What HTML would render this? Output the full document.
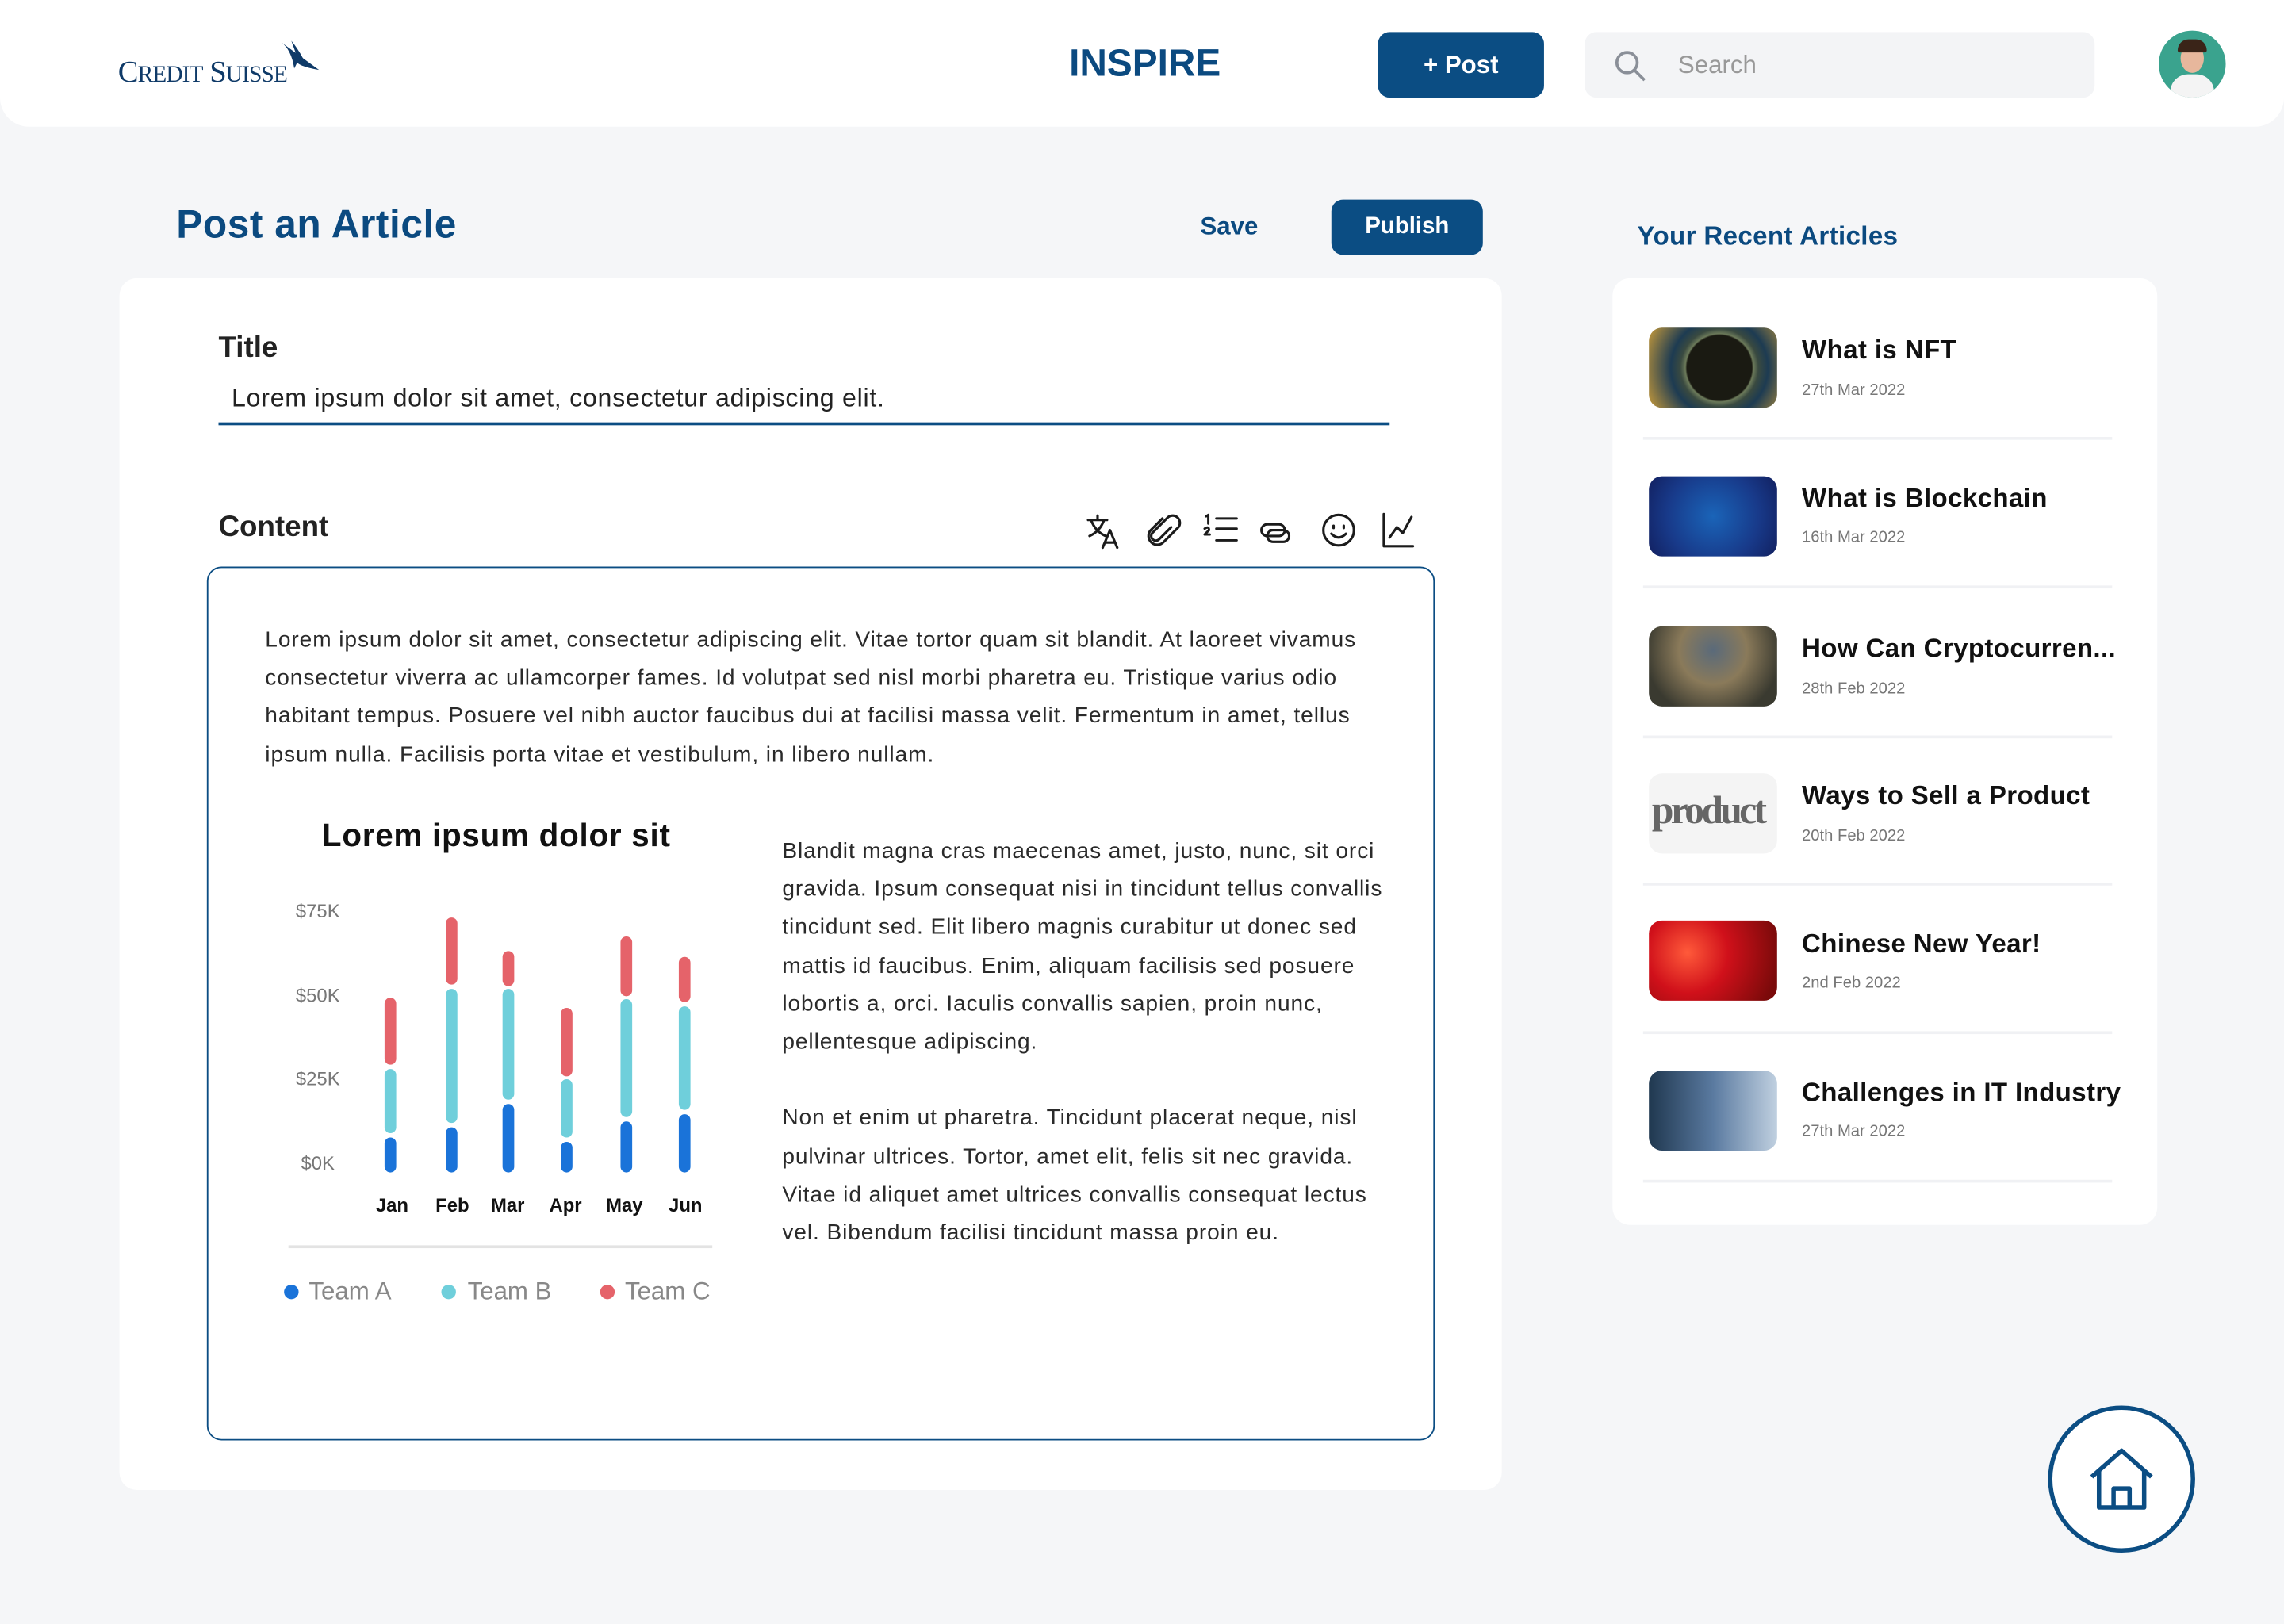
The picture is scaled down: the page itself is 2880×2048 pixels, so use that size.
<!DOCTYPE html>
<html><head><meta charset="utf-8"><style>
*{margin:0;padding:0;box-sizing:border-box}
html,body{width:2880px;height:2048px;overflow:hidden;background:#f5f6f8}
#w{width:1568px;height:1115px;transform:scale(1.836735);transform-origin:0 0;position:relative;font-family:"Liberation Sans",sans-serif;color:#1d1d1f}
.a{position:absolute;white-space:nowrap}
.blue{color:#0b4a80}
.card{position:absolute;background:#fff;border-radius:12px}
.bar{position:absolute;width:8px;border-radius:4px}
.r{background:#e5636a}.t{background:#6fcfdb}.b{background:#1a73d9}
.item .th{position:absolute;left:1132px;width:88px;height:55px;border-radius:9px}
.tt{font-size:18px;font-weight:bold;color:#111;letter-spacing:.2px}
.dt{font-size:11px;color:#777}
.hr{position:absolute;left:1128px;width:322px;height:2px;background:#f0f1f4}
p.tx{font-size:15.3px;line-height:26.2px;color:#2a2a2a;letter-spacing:.5px}
</style></head><body><div id="w">
<div class="card" style="left:0;top:-20px;width:1568px;height:107px;border-radius:20px"></div>
<div class="a" style="left:81px;top:37px;font-family:'Liberation Serif',serif;font-size:21px;color:#0f3a68;letter-spacing:-.5px">C<span style="font-size:16px">REDIT</span> S<span style="font-size:16px">UISSE</span></div>
<svg class="a" style="left:192px;top:27px" width="28" height="24" viewBox="0 0 28 24"><path d="M1 2 Q8 7 10 20 L12 16 Q15 19 27 21 Z" fill="#0f3a68"/><path d="M8 1 Q13 7 17 15 L13 15 Z" fill="#0f3a68"/></svg>
<div class="a blue" style="left:734px;top:28px;font-size:26px;font-weight:bold">INSPIRE</div>
<div class="a" style="left:946px;top:22px;width:114px;height:45px;background:#0b4d83;border-radius:8px;color:#fff;font-weight:bold;font-size:17px;text-align:center;line-height:45px">+ Post</div>
<div class="a" style="left:1088px;top:22px;width:350px;height:45px;background:#f3f4f6;border-radius:8px"></div>
<svg class="a" style="left:1107px;top:33px" width="24" height="24" viewBox="0 0 24 24" fill="none" stroke="#8a8f98" stroke-width="2"><circle cx="10" cy="10" r="7"/><path d="M15 15l7 7"/></svg>
<div class="a" style="left:1152px;top:35px;font-size:17px;color:#999">Search</div>
<div class="a" style="left:1482px;top:21px;width:46px;height:46px;border-radius:50%;background:#3aa38e;overflow:hidden"><div style="position:absolute;left:15px;top:9px;width:16px;height:20px;border-radius:50%;background:#e7b79c"></div><div style="position:absolute;left:13px;top:6px;width:20px;height:9px;border-radius:10px 10px 2px 2px;background:#3a2418"></div><div style="position:absolute;left:8px;top:30px;width:30px;height:20px;border-radius:12px 12px 0 0;background:#f4f4f4"></div></div>

<div class="a blue" style="left:121px;top:139px;font-size:27px;font-weight:bold;letter-spacing:.3px">Post an Article</div>
<div class="a blue" style="left:824px;top:146px;font-size:17px;font-weight:bold">Save</div>
<div class="a" style="left:914px;top:137px;width:104px;height:38px;background:#0b4d83;border-radius:8px;color:#fff;font-weight:bold;font-size:16px;text-align:center;line-height:38px">Publish</div>

<div class="card" style="left:82px;top:191px;width:949px;height:832px"></div>
<div class="a" style="left:150px;top:228px;font-size:20px;font-weight:bold;color:#222">Title</div>
<div class="a" style="left:159px;top:263px;font-size:17.5px;color:#222;letter-spacing:.4px">Lorem ipsum dolor sit amet, consectetur adipiscing elit.</div>
<div class="a" style="left:150px;top:290px;width:804px;height:1.5px;background:#0b4d83"></div>
<div class="a" style="left:150px;top:351px;font-size:20px;font-weight:bold;color:#222">Content</div>
<svg class="a" style="left:744px;top:350px" width="230" height="30" viewBox="0 0 230 30" fill="none" stroke="#1b1b1b" stroke-width="1.7" stroke-linecap="round" stroke-linejoin="round">
<path d="M3 7h13M9.5 4v3M5 7q3 8 10 11M14 7q-3 8-10 11M13 26l5-12 5 12M14.5 22.5h7"/>
<path d="M60 12l-8 8a3 3 0 0 1-5-4l11-11a5 5 0 0 1 7 7l-10 10a6 6 0 0 1-9-8l8-8"/>
<path d="M84 4.5l1.5-1v6M83 13q3-2 3 1l-3 3h3.5M91 6h14M91 13h14M91 21h14" stroke-width="1.6"/>
<path d="M133 10h-7a4 4 0 0 0 0 8h8a4 4 0 0 0 0-8M128 14h9a4 4 0 0 1 0 8h-7a4 4 0 0 1 0-8"/>
<circle cx="175" cy="14" r="10.5"/><path d="M170 16.5q5 5 10 0M171.5 11v1.5M178.5 11v1.5"/>
<path d="M206 3v22h20M210 19l5-7 4 4 6-11"/>
</svg>
<div class="a" style="left:142px;top:389px;width:843px;height:600px;border:1.6px solid #0b4d83;border-radius:10px"></div>
<p class="a tx" style="left:182px;top:427px;white-space:normal;width:780px">Lorem ipsum dolor sit amet, consectetur adipiscing elit. Vitae tortor quam sit blandit. At laoreet vivamus consectetur viverra ac ullamcorper fames. Id volutpat sed nisl morbi pharetra eu. Tristique varius odio habitant tempus. Posuere vel nibh auctor faucibus dui at facilisi massa velit. Fermentum in amet, tellus ipsum nulla. Facilisis porta vitae et vestibulum, in libero nullam.</p>
<p class="a tx" style="left:537px;top:572px;white-space:normal;width:420px">Blandit magna cras maecenas amet, justo, nunc, sit orci gravida. Ipsum consequat nisi in tincidunt tellus convallis tincidunt sed. Elit libero magnis curabitur ut donec sed mattis id faucibus. Enim, aliquam facilisis sed posuere lobortis a, orci. Iaculis convallis sapien, proin nunc, pellentesque adipiscing.<br><br>Non et enim ut pharetra. Tincidunt placerat neque, nisl pulvinar ultrices. Tortor, amet elit, felis sit nec gravida. Vitae id aliquet amet ultrices convallis consequat lectus vel. Bibendum facilisi tincidunt massa proin eu.</p>

<div class="a" style="left:221px;top:561px;font-size:22px;font-weight:bold;color:#111;letter-spacing:.4px">Lorem ipsum dolor sit</div>
<div class="a" style="left:203px;top:597px;font-size:13px;color:#777;line-height:57.5px">$75K<br>$50K<br>$25K<br>&nbsp;$0K</div>
<div class="bar r" style="left:264px;top:685px;height:46px"></div><div class="bar t" style="left:264px;top:734px;height:44px"></div><div class="bar b" style="left:264px;top:781px;height:24px"></div>
<div class="bar r" style="left:306px;top:630px;height:46px"></div><div class="bar t" style="left:306px;top:679px;height:92px"></div><div class="bar b" style="left:306px;top:774px;height:31px"></div>
<div class="bar r" style="left:345px;top:653px;height:24px"></div><div class="bar t" style="left:345px;top:679px;height:76px"></div><div class="bar b" style="left:345px;top:758px;height:47px"></div>
<div class="bar r" style="left:385px;top:692px;height:47px"></div><div class="bar t" style="left:385px;top:741px;height:40px"></div><div class="bar b" style="left:385px;top:784px;height:21px"></div>
<div class="bar r" style="left:426px;top:643px;height:41px"></div><div class="bar t" style="left:426px;top:686px;height:81px"></div><div class="bar b" style="left:426px;top:770px;height:35px"></div>
<div class="bar r" style="left:466px;top:657px;height:31px"></div><div class="bar t" style="left:466px;top:691px;height:71px"></div><div class="bar b" style="left:466px;top:765px;height:40px"></div>
<div class="a" style="left:258px;top:820px;font-size:13px;font-weight:bold;color:#111"><span style="position:absolute;left:0">Jan</span><span style="position:absolute;left:41px">Feb</span><span style="position:absolute;left:79px">Mar</span><span style="position:absolute;left:119px">Apr</span><span style="position:absolute;left:158px">May</span><span style="position:absolute;left:201px">Jun</span></div>
<div class="a" style="left:198px;top:855px;width:291px;height:2px;background:#e3e3e3"></div>
<div class="a" style="left:195px;top:877px;font-size:17px;color:#888">
<span style="position:absolute;left:0;top:5px;width:10px;height:10px;border-radius:50%;background:#1a73d9"></span><span style="position:absolute;left:17px">Team A</span>
<span style="position:absolute;left:108px;top:5px;width:10px;height:10px;border-radius:50%;background:#6fcfdb"></span><span style="position:absolute;left:126px">Team B</span>
<span style="position:absolute;left:217px;top:5px;width:10px;height:10px;border-radius:50%;background:#e5636a"></span><span style="position:absolute;left:234px">Team C</span></div>

<div class="a blue" style="left:1124px;top:152px;font-size:18px;font-weight:bold;letter-spacing:.2px">Your Recent Articles</div>
<div class="card" style="left:1107px;top:191px;width:374px;height:650px"></div>
<div class="item">
<div class="th" style="top:225px;background:radial-gradient(circle at 55% 50%,#1a1a12 0 40%,#6c7a5a 42%,#3a4a40 48%,#1d3b52 60%,#c89b3a 100%)"></div>
<div class="a tt" style="left:1237px;top:230px">What is NFT</div><div class="a dt" style="left:1237px;top:262px">27th Mar 2022</div>
<div class="hr" style="top:300px"></div>
<div class="th" style="top:327px;background:radial-gradient(circle at 50% 50%,#1a64b8,#183a8a 60%,#122060)"></div>
<div class="a tt" style="left:1237px;top:332px">What is Blockchain</div><div class="a dt" style="left:1237px;top:363px">16th Mar 2022</div>
<div class="hr" style="top:402px"></div>
<div class="th" style="top:430px;background:radial-gradient(circle at 50% 30%,#5a6a7a,#8a7a5a 40%,#3a3a30 80%)"></div>
<div class="a tt" style="left:1237px;top:435px">How Can Cryptocurren...</div><div class="a dt" style="left:1237px;top:467px">28th Feb 2022</div>
<div class="hr" style="top:505px"></div>
<div class="th" style="top:531px;background:#f4f4f4;overflow:hidden"><span style="position:absolute;left:2px;top:10px;font-family:'Liberation Serif',serif;font-weight:bold;font-size:27px;color:#666;letter-spacing:-2px">product</span></div>
<div class="a tt" style="left:1237px;top:536px">Ways to Sell a Product</div><div class="a dt" style="left:1237px;top:568px">20th Feb 2022</div>
<div class="hr" style="top:606px"></div>
<div class="th" style="top:632px;background:radial-gradient(circle at 30% 40%,#ff5a3a,#d0101a 40%,#7a0a0a 90%)"></div>
<div class="a tt" style="left:1237px;top:638px">Chinese New Year!</div><div class="a dt" style="left:1237px;top:669px">2nd Feb 2022</div>
<div class="hr" style="top:708px"></div>
<div class="th" style="top:735px;background:linear-gradient(90deg,#203850,#5a7aa0 50%,#c0d0e0)"></div>
<div class="a tt" style="left:1237px;top:740px">Challenges in IT Industry</div><div class="a dt" style="left:1237px;top:771px">27th Mar 2022</div>
<div class="hr" style="top:810px"></div>
</div>

<div class="a" style="left:1406px;top:965px;width:101px;height:101px;border-radius:50%;background:#fff;border:3px solid #0b4d83"></div>
<svg class="a" style="left:1433px;top:992px" width="47" height="47" viewBox="0 0 47 47" fill="none" stroke="#0b4d83" stroke-width="3" stroke-linejoin="round"><path d="M3 22L23.5 4 44 22M8 18v25h31V18M18 43V30h11v13"/></svg>
</div></body></html>
